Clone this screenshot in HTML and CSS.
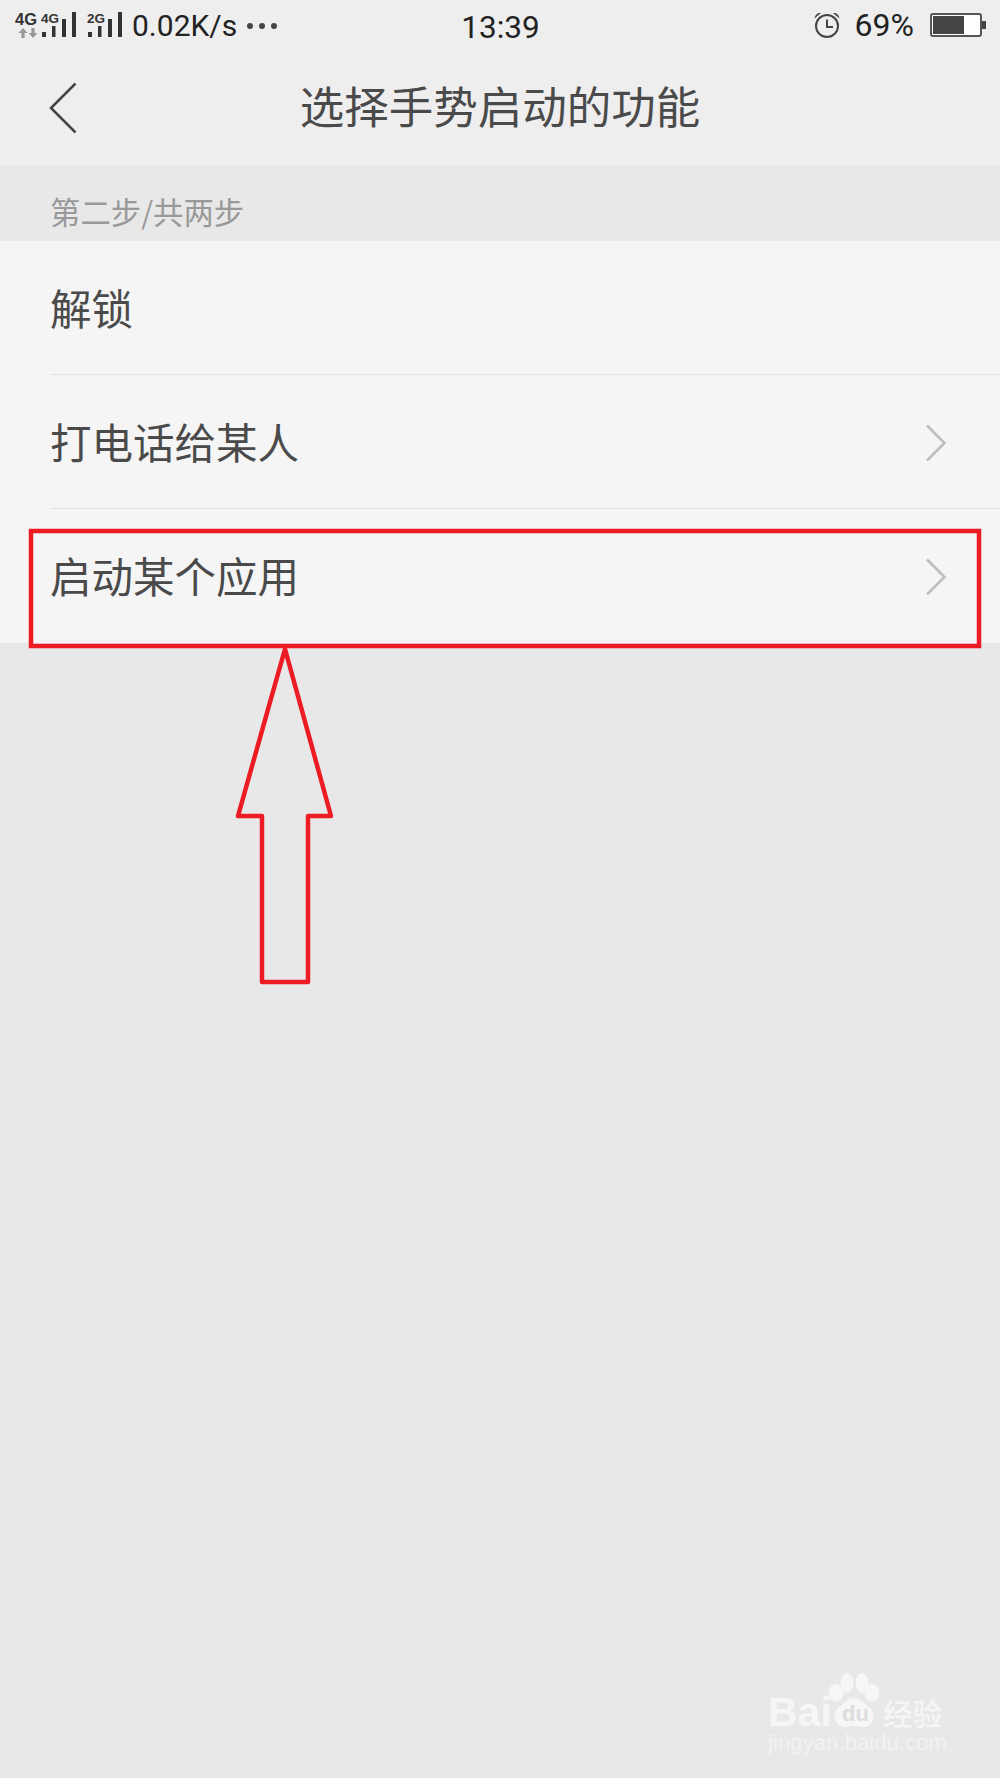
FILE: index.html
```html
<!DOCTYPE html>
<html lang="zh-CN">
<head>
<meta charset="utf-8">
<title>选择手势启动的功能</title>
<link rel="stylesheet" href="styles.css">
</head>
<body>
<div class="screen">
  <header class="top">
    <div class="status">
      <div class="status-left">
        <div class="net">
          <span class="net-label">4G</span>
          <svg class="net-arrows" width="22" height="10" viewBox="0 0 22 10"><path d="M6 0l4.500 5H7.600v5H4.400V5H1.500zM16 10l-4.500-5h2.900V0h3.200v5h2.900z" fill="#999"/></svg>
        </div>
        <div class="sim">
          <span class="sim-label">4G</span>
          <svg class="bars" width="35" height="25" viewBox="0 0 35 25"><path d="M0 20h4v5H0zM10 14h3.500v11H10zM20 7h4v18h-4zM30 0h4v25h-4z" fill="#333"/></svg>
        </div>
        <div class="sim sim-2">
          <span class="sim-label">2G</span>
          <svg class="bars" width="35" height="25" viewBox="0 0 35 25"><path d="M0 20h4v5H0zM10 14h3.500v11H10zM20 7h4v18h-4zM30 0h4v25h-4z" fill="#333"/></svg>
        </div>
        <span class="speed">0.02K/s</span>
        <svg class="dots" width="32" height="8" viewBox="0 0 32 8"><circle cx="4" cy="4" r="3" fill="#444"/><circle cx="16" cy="4" r="3" fill="#444"/><circle cx="28" cy="4" r="3" fill="#444"/></svg>
      </div>
      <span class="time">13:39</span>
      <div class="status-right">
        <svg class="alarm" width="28" height="28" viewBox="0 0 28 28"><circle cx="14" cy="15" r="11" fill="none" stroke="#444" stroke-width="2"/><path d="M14 8.500V16h6" fill="none" stroke="#444" stroke-width="2"/><path d="M1.500 7.500C2 3.500 5 1.500 8 2zM26.500 7.500C26 3.500 23 1.500 20 2z" fill="#444"/></svg>
        <span class="battery-text">69%</span>
        <div class="battery"><div class="battery-fill"></div></div>
        <div class="battery-nub"></div>
      </div>
    </div>
    <div class="titlebar">
      <svg class="back" width="28" height="52" viewBox="0 0 28 52"><path d="M26.500 1.500L2 26l24.500 24.500" fill="none" stroke="#444" stroke-width="2.500"/></svg>
      <h1 class="title">选择手势启动的功能</h1>
    </div>
  </header>
  <div class="step">第二步/共两步</div>
  <ul class="list">
    <li class="row"><span class="row-text">解锁</span></li>
    <li class="row"><span class="row-text">打电话给某人</span>
      <svg class="chev" width="22" height="38" viewBox="0 0 22 38"><path d="M2 1.500L19.500 19 2 36.500" fill="none" stroke="#bdbdbd" stroke-width="2.500"/></svg></li>
    <li class="row"><span class="row-text">启动某个应用</span>
      <svg class="chev" width="22" height="38" viewBox="0 0 22 38"><path d="M2 1.500L19.500 19 2 36.500" fill="none" stroke="#bdbdbd" stroke-width="2.500"/></svg></li>
  </ul>

  <svg class="annot" width="1000" height="1778" viewBox="0 0 1000 1778">
    <rect x="31" y="531" width="948" height="115" fill="none" stroke="#ed1c24" stroke-width="4.500"/>
    <path d="M285 649L238 816H262V982H308V816H331Z" fill="none" stroke="#ed1c24" stroke-width="4.500" stroke-linejoin="round"/>
  </svg>

  <div class="mark">
    <span class="mark-bai">Bai</span>
    <svg class="mark-paw" width="54" height="58" viewBox="0 0 54 58">
      <ellipse cx="9" cy="21" rx="7.500" ry="9" fill="#f6f6f6"/>
      <ellipse cx="20" cy="11" rx="6.500" ry="10" fill="#f6f6f6"/>
      <ellipse cx="35" cy="11" rx="6.500" ry="10" fill="#f6f6f6"/>
      <ellipse cx="45" cy="21" rx="7.500" ry="9" fill="#f6f6f6"/>
      <path d="M27 26c7 0 9 5 15 9 7 5 6 20-6 20-4 0-6-1-9-1s-5 1-9 1C6 55 5 40 12 35c6-4 8-9 15-9z" fill="#f6f6f6"/>
    </svg>
    <span class="mark-du">du</span>
    <span class="mark-cn">经验</span>
    <div class="mark-url">jingyan.baidu.com</div>
  </div>
</div>
</body>
</html>
```
FILE: styles.css
```css
* { box-sizing: border-box; }
html, body { margin: 0; padding: 0; }
body { background: #e8e8e8; font-family: "Noto Sans CJK SC", "Noto Sans", sans-serif; }
.screen { position: relative; width: 1000px; height: 1778px; background: #e8e8e8; overflow: hidden; }

.top { height: 167px; background: #eeeeee; border-bottom: 1px solid #e2e2e2; }

.status { height: 50px; display: grid; grid-template-columns: 1fr auto 1fr; align-items: center; padding: 0 14px 0 15px; }
.status-left { display: flex; align-items: flex-start; height: 50px; padding-top: 12px; }
.net { width: 26px; display: flex; flex-direction: column; align-items: flex-start; }
.net-label { font: bold 16.500px/15px "Liberation Sans", sans-serif; color: #333; }
.net-arrows { margin: 1px 0 0 2px; }
.sim { position: relative; width: 35px; height: 25px; margin-left: 1px; display: flex; align-items: flex-end; }
.sim-2 { margin-left: 11px; }
.sim-label { position: absolute; left: -1px; top: 1px; font: bold 13.500px/11px "Liberation Sans", sans-serif; color: #333; }
.bars { display: block; }
.speed { margin-left: 9px; font: 30px/28px "Roboto", sans-serif; color: #222; }
.dots { margin: 10px 0 0 9px; }
.time { font: 31.500px/30px "Roboto", sans-serif; color: #222; margin-top: 5px; }
.status-right { display: flex; align-items: center; justify-content: flex-end; height: 50px; }
.alarm { display: block; margin-right: 14px; }
.battery-text { font: 32px/30px "Roboto", sans-serif; color: #222; margin-right: 16px; }
.battery { width: 52px; height: 24px; padding: 1px; border: 2px solid #555; border-radius: 3px; background: #fff; }
.battery-fill { width: 31px; height: 100%; background: #444; }
.battery-nub { width: 4px; height: 8px; background: #444; }

.titlebar { position: relative; height: 116px; display: flex; align-items: center; justify-content: center; padding-bottom: 6px; }
.back { position: absolute; left: 49px; top: 32px; }
.title { margin: 0; font-size: 44.500px; line-height: 60px; font-weight: 400; color: #4a4a4a; }

.step { height: 73px; padding: 22px 50px 0; background: #e8e8e8; font-size: 30.400px; line-height: 44px; font-weight: 400; color: #999999; }

.list { list-style: none; margin: 0; padding: 0; background: #f5f5f5; border-top: 1px solid #e9e9e9; }
.row { position: relative; height: 134px; display: flex; align-items: center; justify-content: space-between; padding: 0 53px 3px 50px; }
.row:not(:last-child)::after { content: ""; position: absolute; left: 50px; right: 0; bottom: 0; height: 1px; background: #e2e2e2; }
.row-text { font-size: 41.500px; line-height: 60px; font-weight: 400; color: #4a4a4a; }
.chev { display: block; margin-top: 5px; }

.annot { position: absolute; left: 0; top: 0; pointer-events: none; }

.mark { position: absolute; left: 768px; top: 1672px; width: 178px; height: 84px; color: #f6f6f6; }
.mark-bai { position: absolute; left: 0; top: 20px; font: bold 41px/41px "Liberation Sans", sans-serif; }
.mark-paw { position: absolute; left: 59px; top: 0; }
.mark-du { position: absolute; left: 74px; top: 31px; font: bold 22px/22px "Liberation Sans", sans-serif; color: #dcdcdc; }
.mark-cn { position: absolute; left: 115px; top: 20px; font-size: 29.500px; line-height: 40px; font-weight: 500; white-space: nowrap; }
.mark-url { position: absolute; left: 0; top: 58px; font: 22px/26px "Liberation Sans", sans-serif; letter-spacing: .100px; color: #f2f2f2; white-space: nowrap; }
```
